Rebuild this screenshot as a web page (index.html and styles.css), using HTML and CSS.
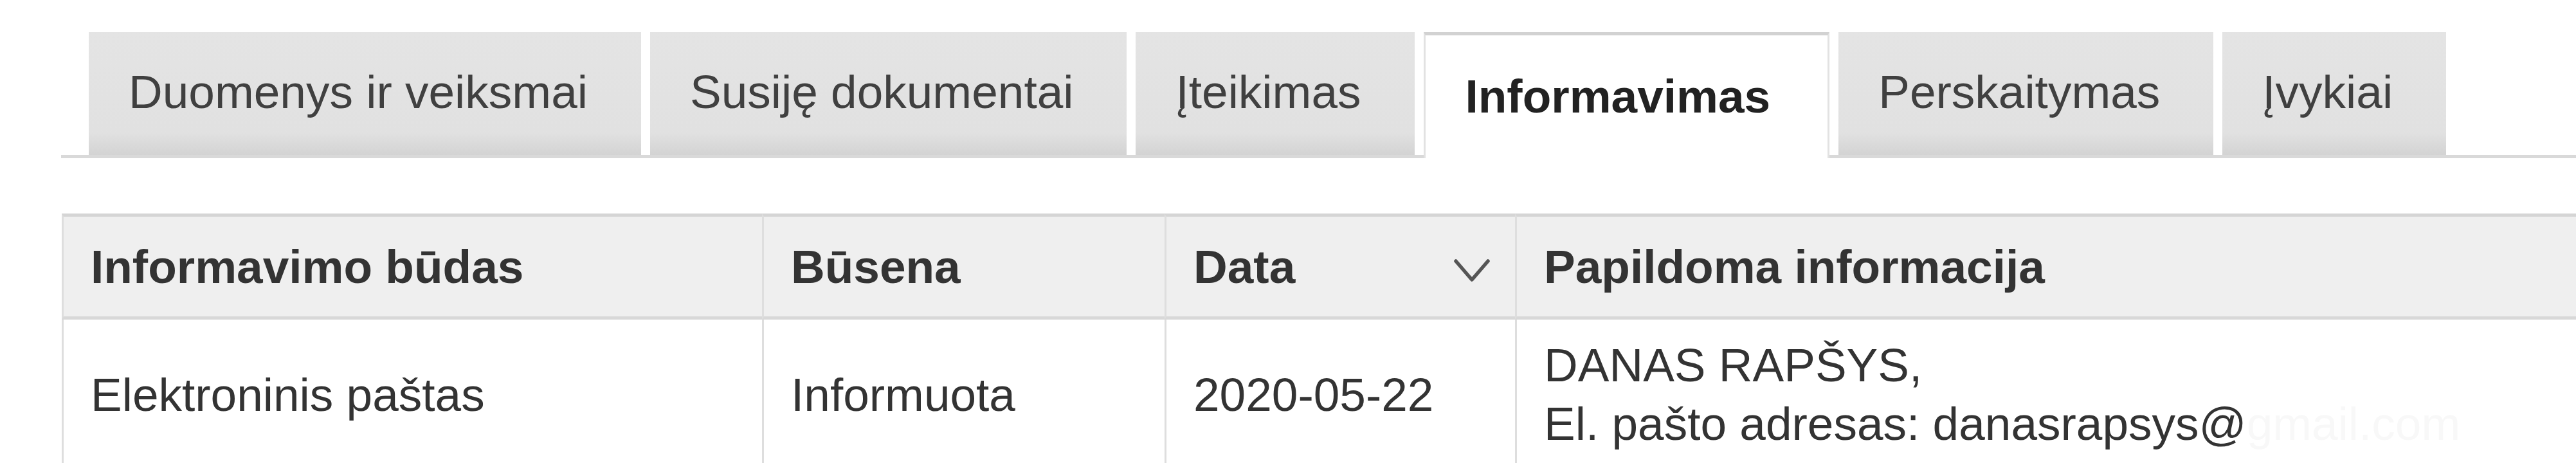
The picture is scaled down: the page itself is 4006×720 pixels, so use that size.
FILE: index.html
```html
<!DOCTYPE html>
<html lang="lt">
<head>
<meta charset="utf-8">
<title>Informavimas</title>
<link rel="stylesheet" href="styles.css">
</head>
<body>
<nav class="tabs">
  <div class="tab">Duomenys ir veiksmai</div>
  <div class="tab">Susiję dokumentai</div>
  <div class="tab">Įteikimas</div>
  <div class="tab active">Informavimas</div>
  <div class="tab">Perskaitymas</div>
  <div class="tab">Įvykiai</div>
</nav>
<table class="info">
  <colgroup>
    <col class="c1"><col class="c2"><col class="c3"><col class="c4">
  </colgroup>
  <thead>
    <tr>
      <th>Informavimo būdas</th>
      <th>Būsena</th>
      <th><div class="sort"><span>Data</span><svg class="chev" width="58" height="38" viewBox="0 0 58 38"><polyline points="4,4 29,33 54,4" fill="none" stroke="#555" stroke-width="5.5" stroke-linecap="round" stroke-linejoin="round"/></svg></div></th>
      <th>Papildoma informacija</th>
    </tr>
  </thead>
  <tbody>
    <tr>
      <td>Elektroninis paštas</td>
      <td>Informuota</td>
      <td>2020-05-22</td>
      <td>DANAS RAPŠYS,<br>El. pašto adresas: danasrapsys@<span class="redacted">gmail.com</span></td>
    </tr>
  </tbody>
</table>
</body>
</html>
```
FILE: styles.css
```css
* { box-sizing: border-box; }
html, body { margin: 0; padding: 0; background: #fff; overflow: hidden; }
body {
  font-family: "Liberation Sans", Arial, Helvetica, sans-serif;
  font-size: 73px;
  color: #333;
}
.tabs {
  display: flex;
  align-items: flex-end;
  gap: 14px;
  margin: 50px 0 0 95px;
  padding-left: 43px;
  border-bottom: 5px solid #d9d9d9;
}
.tab {
  display: flex;
  align-items: center;
  height: 191px;
  padding: 0 83px 6px 62px;
  background: linear-gradient(to bottom, #e4e4e4 0%, #e1e1e1 82%, #d3d3d3 100%);
  color: #404040;
  white-space: nowrap;
}
.tab.active {
  height: 196px;
  margin-bottom: -5px;
  padding-bottom: 3px;
  padding-left: 62px;
  padding-right: 89px;
  background: #fff;
  border-top: 5px solid #d2d2d2;
  border-left: 3px solid #e2e2e2;
  border-right: 3px solid #e2e2e2;
  color: #222;
  font-weight: bold;
}
.info {
  margin: 86px 0 0 96px;
  width: 3960px;
  border-collapse: separate;
  border-spacing: 0;
  table-layout: fixed;
}
.c1 { width: 1089px; }
.c2 { width: 626px; }
.c3 { width: 545px; }
.info th,
.info td {
  border-left: 3px solid #dedede;
  padding: 0 42px;
  text-align: left;
  vertical-align: middle;
  white-space: nowrap;
}
.info th {
  height: 165px;
  background: #efefef;
  border-top: 5px solid #d5d5d5;
  border-bottom: 5px solid #d8d8d8;
  font-weight: bold;
  color: #333;
}
.info td {
  padding-top: 25px;
  padding-bottom: 25px;
  line-height: 91px;
  color: #333;
  font-weight: normal;
}
.sort {
  display: flex;
  align-items: center;
  justify-content: space-between;
}
.chev { margin-top: 12px; margin-right: -4px; }
.redacted { color: #f8f8f8; }
```
